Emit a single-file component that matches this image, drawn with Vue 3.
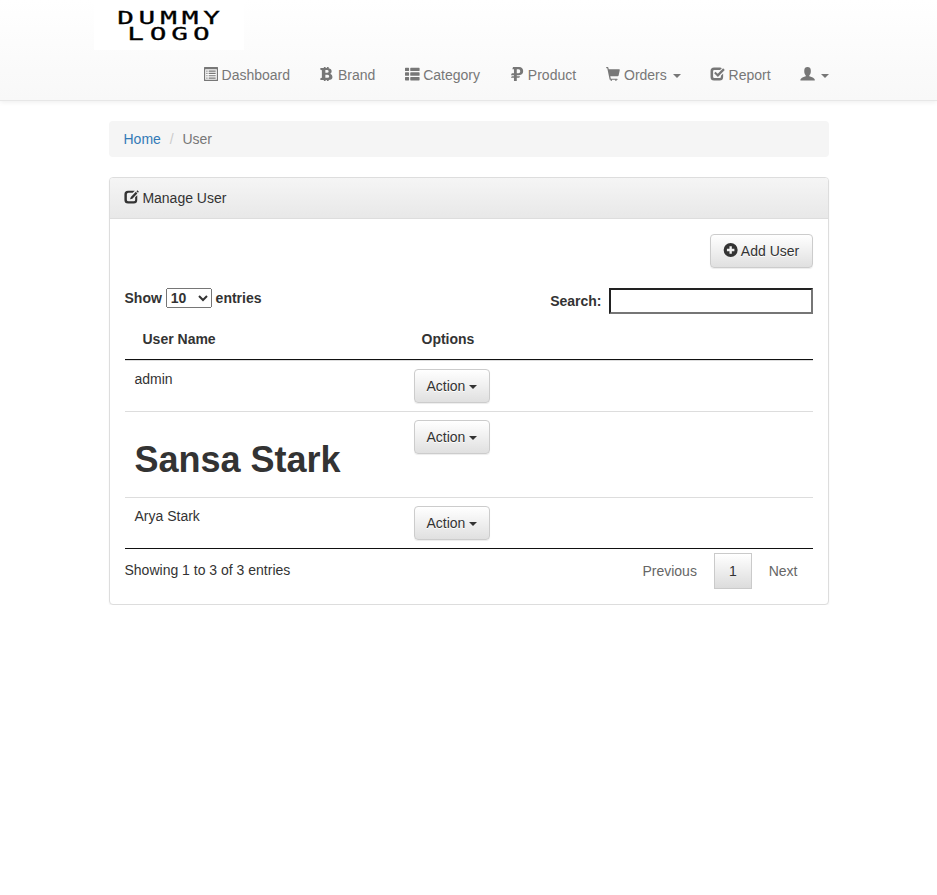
<script setup>
import { h } from 'vue'

const icons = {
  list: 'M50 0H1150Q1200 0 1200 50V1150Q1200 1200 1150 1200H50Q0 1200 0 1150V50Q0 0 50 0ZM100 200V1100H1100V200ZM200 300H300V400H200ZM400 300H1000V400H400ZM200 500H300V600H200ZM400 500H1000V600H400ZM200 700H300V800H200ZM400 700H1000V800H400ZM200 900H300V1000H200ZM400 900H1000V1000H400Z',
  bitcoin: 'M30 90H330V0H480V90H590V0H740V98Q1000 140 1000 360Q1000 500 880 570Q1070 650 1070 850Q1070 1090 740 1108V1200H590V1110H480V1200H330V1110H30V970L160 930V270L30 230ZM460 260V490H600Q740 490 740 375Q740 260 600 260ZM460 670V930H640Q790 930 790 800Q790 670 640 670Z',
  rows: 'M50 60H300Q350 60 350 110V300Q350 350 300 350H50Q0 350 0 300V110Q0 60 50 60ZM500 60H1200Q1250 60 1250 110V300Q1250 350 1200 350H500Q450 350 450 300V110Q450 60 500 60ZM50 460H300Q350 460 350 510V700Q350 750 300 750H50Q0 750 0 700V510Q0 460 50 460ZM500 460H1200Q1250 460 1250 510V700Q1250 750 1200 750H500Q450 750 450 700V510Q450 460 500 460ZM50 860H300Q350 860 350 910V1100Q350 1150 300 1150H50Q0 1150 0 1100V910Q0 860 50 860ZM500 860H1200Q1250 860 1250 910V1100Q1250 1150 1200 1150H500Q450 1150 450 1100V910Q450 860 500 860Z',
  ruble: 'M260 0H780Q1130 20 1130 350Q1130 680 780 710H580V790H870L790 930H580V1200H340V930H80L160 790H340V700H80L160 540H340V190H200ZM580 190V530H730Q880 520 880 360Q880 200 730 190Z',
  cart: 'M56 0H150Q190 0 199 38L237 200H1133Q1190 210 1182 261L1082 736Q1060 800 1000 800H367L415 1000H950Q1000 1000 1000 1050Q1000 1100 950 1100H900V1150Q900 1200 850 1200Q800 1200 800 1150V1100H500V1150Q500 1200 450 1200Q400 1200 400 1150V1100H369Q330 1100 311 1061L110 100H56Q6 100 6 50Q6 0 56 0Z',
  check: 'M260 50H780Q860 55 930 100L780 260H290Q180 260 180 360V840Q180 940 290 940H750Q850 940 850 840V750L1040 560V850Q1040 1150 740 1150H260Q-40 1150 -40 850V350Q-40 50 260 50ZM380 410L580 580L1040 110L1180 250L590 860L270 530Z',
  user: 'M560 0Q820 0 840 280V460Q825 620 710 720V800Q1140 940 1180 1070V1150H-50V1070Q-10 940 410 800V720Q300 620 280 460V280Q300 0 560 0Z',
  edit: 'M260 60H840L660 240H300Q160 240 160 370V830Q160 970 300 970H750Q870 970 870 850V630L1050 450V850Q1050 1150 750 1150H260Q-50 1150 -50 850V360Q-50 60 260 60ZM930 160L1060 290L630 740L430 800L500 590ZM1070 30L1190 150L1110 235L980 110Z',
  plus: 'M570 0A600 600 0 1 0 570 1200A600 600 0 1 0 570 0ZM470 280H670V500H890V700H670V920H470V700H250V500H470Z',
}

const Glyph = (props) =>
  h('svg', { class: 'glyph', viewBox: '0 0 1200 1200', 'aria-hidden': 'true' }, [
    h('path', { d: icons[props.name], fill: 'currentColor', 'fill-rule': 'evenodd' }),
  ])
Glyph.props = ['name']

const nav = [
  { icon: 'list', label: 'Dashboard' },
  { icon: 'bitcoin', label: 'Brand' },
  { icon: 'rows', label: 'Category' },
  { icon: 'ruble', label: 'Product' },
  { icon: 'cart', label: 'Orders', caret: true },
  { icon: 'check', label: 'Report' },
  { icon: 'user', label: '', caret: true },
]

const users = [
  { name: 'admin' },
  { name: 'Sansa Stark', heading: true },
  { name: 'Arya Stark' },
]
</script>

<template>
  <nav class="navbar">
    <div class="container">
      <a class="brand">
        <svg width="150" height="50" viewBox="0 0 150 50">
          <g class="logo-text" transform="scale(1.5 1)">
            <text y="24" x="15.5 29.7 44.2 58.5 72.9">DUMMY</text>
            <text y="40" x="22.2 37.2 51.5 66">LOGO</text>
          </g>
        </svg>
      </a>
      <ul class="menu">
        <li v-for="item in nav" :key="item.icon">
          <a><Glyph :name="item.icon" />{{ ' ' + item.label }}<template v-if="item.caret">{{ item.label ? ' ' : '' }}<span class="caret"></span></template></a>
        </li>
      </ul>
    </div>
  </nav>

  <main class="container content">
    <ol class="breadcrumb">
      <li><a>Home</a></li>
      <li class="active">User</li>
    </ol>

    <section class="panel">
      <header class="panel-heading"><Glyph name="edit" /> Manage User</header>
      <div class="panel-body">
        <div class="actions">
          <button class="btn add"><Glyph name="plus" /> Add User</button>
        </div>
        <div class="filters">
          <label>Show <select><option>10</option><option>25</option></select> entries</label>
          <label class="search">Search:<input type="search" /></label>
        </div>
        <table>
          <thead>
            <tr><th class="name">User Name</th><th>Options</th></tr>
          </thead>
          <tbody>
            <tr v-for="user in users" :key="user.name">
              <td><h1 v-if="user.heading">{{ user.name }}</h1><template v-else>{{ user.name }}</template></td>
              <td><button class="btn">Action <span class="caret"></span></button></td>
            </tr>
          </tbody>
        </table>
        <div class="footer">
          <div class="info">Showing 1 to 3 of 3 entries</div>
          <div class="pages">
            <a>Previous</a><a class="current">1</a><a>Next</a>
          </div>
        </div>
      </div>
    </section>
  </main>
</template>

<style>
body { background: #fff; }
.glyph {
  width: 14px;
  height: 14px;
  position: relative;
  top: 1px;
  overflow: visible;
}
</style>

<style scoped>
* { box-sizing: border-box; }
.navbar, .content {
  font: 14px/20px "Liberation Sans", Arial, sans-serif;
  color: #333;
}
.container { width: 750px; margin: 0 auto; }
.content { padding: 0 15px; }
.navbar {
  height: 101px;
  margin-bottom: 20px;
  border-bottom: 1px solid #e7e7e7;
  background: linear-gradient(#fff, #f8f8f8);
  box-shadow: 0 1px 5px rgba(0, 0, 0, .075);
}
.brand { display: block; width: 150px; height: 50px; background: #fff; }
.brand svg { display: block; }
.logo-text { font: 18.5px "DejaVu Sans Mono", monospace; fill: #000; stroke: #000; stroke-width: .3px; }
.menu {
  display: flex;
  justify-content: flex-end;
  margin: 0;
  padding: 0;
  list-style: none;
}
.menu a {
  display: block;
  padding: 15px;
  color: #777;
  text-shadow: 0 1px 0 rgba(255, 255, 255, .25);
  white-space: pre;
}
.caret {
  display: inline-block;
  width: 0;
  height: 0;
  margin-left: 2px;
  vertical-align: middle;
  border-top: 4px solid;
  border-right: 4px solid transparent;
  border-left: 4px solid transparent;
}
.breadcrumb {
  display: flex;
  margin: 0 0 20px;
  padding: 8px 15px;
  list-style: none;
  background: #f5f5f5;
  border-radius: 4px;
}
.breadcrumb a { color: #337ab7; }
.active { color: #777; }
.active::before { content: "/\00a0"; padding: 0 5px; margin-left: 3.8px; color: #ccc; }
.panel {
  border: 1px solid #ddd;
  border-radius: 4px;
  background: #fff;
  box-shadow: 0 1px 2px rgba(0, 0, 0, .05);
}
.panel-heading {
  padding: 10px 15px;
  border-bottom: 1px solid #ddd;
  border-radius: 3px 3px 0 0;
  background: linear-gradient(#f5f5f5, #e8e8e8);
}
.panel-body { padding: 15px; }
.actions { display: flex; justify-content: flex-end; margin-bottom: 20px; }
.btn {
  height: 34px;
  padding: 6px 12px;
  border: 1px solid #ccc;
  border-radius: 4px;
  font: inherit;
  color: #333;
  background: linear-gradient(#fff, #e0e0e0);
  text-shadow: 0 1px 0 #fff;
  box-shadow: inset 0 1px 0 rgba(255, 255, 255, .15), 0 1px 1px rgba(0, 0, 0, .075);
  white-space: nowrap;
}
.btn .caret { margin-left: 0; }
.btn.add { width: 103px; padding-left: 13px; }
.filters {
  display: flex;
  justify-content: space-between;
  align-items: flex-start;
  height: 31px;
  font-weight: bold;
}
select { height: 20px; width: 46px; padding: 0; font: inherit; color: #333; }
.search { display: flex; align-items: center; }
input {
  width: 204px;
  height: 26px;
  margin: 0 0 0 7px;
  padding: 1px 2px;
  border: 2px solid;
  border-color: #222 #767676 #767676 #222;
  font: inherit;
  background: #fff;
}
table {
  width: 100%;
  table-layout: fixed;
  border-collapse: separate;
  border-spacing: 0;
  border-bottom: 1px solid #111;
}
th {
  height: 41px;
  padding: 10px 18px;
  text-align: left;
  line-height: 20px;
  border-bottom: 1px solid #111;
}
th.name { width: 279px; }
td { padding: 8px 10px; vertical-align: top; border-top: 1px solid #ddd; }
td .btn { display: block; }
h1 { margin: 20px 0 10px; font-size: 36px; line-height: 39px; font-weight: bold; }
.footer { display: flex; justify-content: space-between; align-items: flex-start; }
.info { padding-top: 11px; }
.pages { display: flex; padding-top: 4px; }
.pages a {
  height: 36px;
  padding: 7px 14px;
  border: 1px solid transparent;
  color: #666;
  margin-left: 2px;
}
.pages .current { border-color: #cacaca; color: #333; background: linear-gradient(#fff, #dcdcdc); }
</style>
